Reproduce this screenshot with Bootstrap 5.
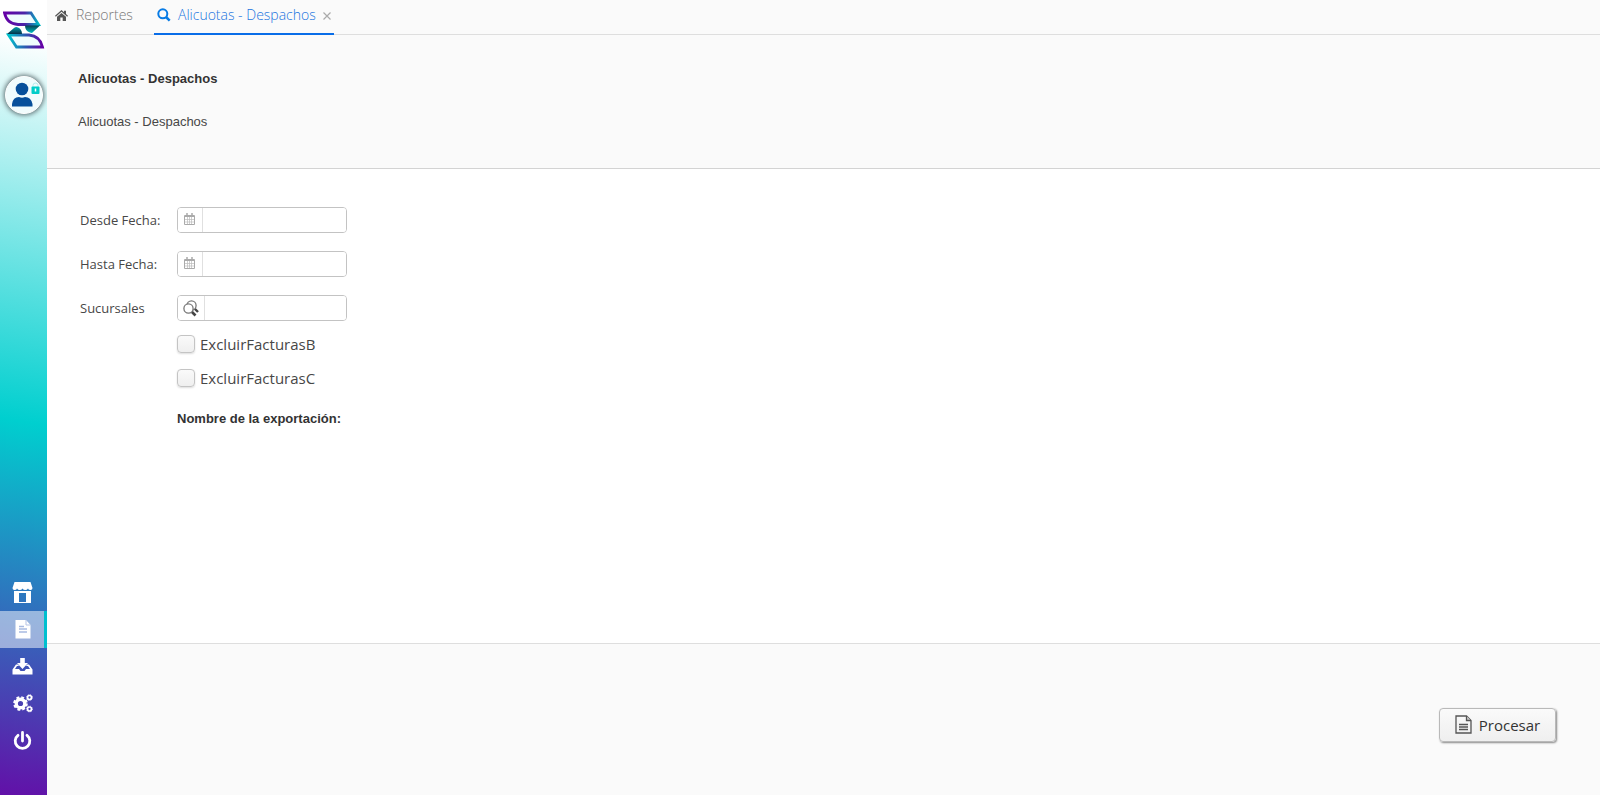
<!DOCTYPE html>
<html lang="es">
<head>
<meta charset="utf-8">
<meta name="viewport" content="width=device-width, initial-scale=1">
<title>Alicuotas - Despachos</title>
<link href="https://cdn.jsdelivr.net/npm/bootstrap@5.3.0/dist/css/bootstrap.min.css" rel="stylesheet">
<style>
body { font-family: "Open Sans", sans-serif; font-size: 14px; line-height: 20px; color: #474747; background: #fff; }
a { text-decoration: none; }
svg { display: block; flex: none; }
.sidebar { width: 47px; background: linear-gradient(190deg, #fff 5%, #00cfcf 53%, #2b7abf 74%, #6210a8 100%); }
.sidebar .logo { margin: 11px 0 0 3px; }
.avatar { width: 38px; height: 38px; margin: 27px 0 0 5px; background: #f1fcfd; border: 1px solid #fff; box-shadow: 0 0 5px 1px #5c6c70; }
.side-item { height: 37px; color: #fff; padding-left: 1px; border-right: 3px solid transparent; }
.side-item.active { background: rgba(255,255,255,.5); background-clip: padding-box; border-right-color: #00bfcf; }
.side-menu { margin-bottom: 36px; }
.tabs { height: 35px; background: #fafafa; border-bottom: 1px solid #dedede; font-weight: 300; }
.tab-link { height: 35px; padding-bottom: 5px; color: #777; font-size: 14px; }
.tab-home { width: 107px; padding-left: 8px; gap: 8px; }
.tab-active { width: 180px; padding-left: 3px; gap: 7px; color: #1b75df; border-bottom: 2px solid #096de8; padding-bottom: 3px; }
.tab-close { border: 0; background: none; padding: 2px 0 0; color: #999; }
.intro { height: 134px; padding: 34px 32px 0 31px; background: #fafafa; border-bottom: 1px solid #d3d3d3; font-family: "Liberation Sans", sans-serif; font-size: 13px; }
.intro h1, .export-name { font-family: "Liberation Sans", sans-serif; font-size: 13px; line-height: 20px; font-weight: 700; color: #333; margin: 0; }
.intro p { margin: 23px 0 0; }
.form-area { padding: 38px 32px 0 33px; }
.field-row { height: 26px; margin-bottom: 18px; }
.field-row:has(+ .checks) { margin-bottom: 14px; }
.field-row label { width: 97px; font-size: 13px; }
.field { width: 170px; height: 26px; border: 1px solid #c3c3c3; border-radius: 4px; background: #fff; overflow: hidden; }
.field-btn { width: 25px; border: 0; border-right: 1px solid #e0e0e0; background: #fff; padding: 0 2px 2px 0; display: flex; align-items: center; justify-content: center; }
.field-btn.wide { width: 27px; padding: 0; }
.field input { border: 0; outline: 0; min-width: 0; font-size: 14px; }
.checks { margin-left: 97px; }
.check-row { height: 18px; margin-bottom: 16px; font-size: 15px; gap: 5px; }
.check-row input { width: 18px; height: 18px; margin: 0; border: 1px solid #c4c4c4; border-radius: 4px; background: linear-gradient(#fafafa, #efefef); box-shadow: 0 1px 2px #ddd; appearance: none; }
.export-name { padding-top: 6px; }
.actions { height: 152px; padding: 64px 44px 0 0; background: #fafafa; border-top: 1px solid #dedede; }
.process { width: 117px; height: 34px; padding: 0; gap: 7px; font-size: 15px; line-height: 20px; color: #333; background: linear-gradient(#fafafa, #efefef); border: 1px solid #b9b9b9; border-radius: 4px; box-shadow: 1px 1px 2px #888; }
.process svg { margin-bottom: 2px; }
</style>
</head>
<body>
<div class="d-flex min-vh-100">
  <nav class="sidebar d-flex flex-column flex-shrink-0" aria-label="Principal">
    <a class="logo" href="#" aria-label="Inicio">
      <svg width="42" height="38" viewBox="0 0 42 38">
        <defs>
          <linearGradient id="ga"><stop offset="0" stop-color="#6500a5"/><stop offset=".6" stop-color="#4a25a8"/><stop offset="1" stop-color="#00b8c2"/></linearGradient>
          <linearGradient id="gb"><stop offset="0" stop-color="#00c3cd"/><stop offset=".5" stop-color="#2c59b0"/><stop offset="1" stop-color="#6500a5"/></linearGradient>
          <linearGradient id="gc" x2="0" y2="1"><stop offset="0" stop-color="#06404f"/><stop offset="1" stop-color="#00bfc4"/></linearGradient>
          <linearGradient id="gd" x2="0" y2="1"><stop offset="0" stop-color="#009aa5"/><stop offset="1" stop-color="#05334a"/></linearGradient>
        </defs>
        <path d="M1.500 2H28L35.500 13.500H15Q4 13 1.500 2Z" fill="#effcfd" stroke="url(#ga)" stroke-width="2.800"/>
        <path d="M5.500 24H26Q37 25 39.500 36H13.500Z" fill="#effcfd" stroke="url(#gb)" stroke-width="2.800"/>
        <path d="M22 14.500H37L30 21Q29 22.500 27 21.500Q22 20 22 14.500Z" fill="url(#gc)"/>
        <path d="M4 23L11 17Q13 15.500 15 16.500Q19 18 19 23Z" fill="url(#gd)"/>
      </svg>
    </a>
    <a class="avatar rounded-circle d-flex align-items-center justify-content-center" href="#" aria-label="Usuario">
      <svg width="34" height="34" viewBox="0 0 34 34">
        <circle cx="15" cy="11" r="6.300" fill="#07509b"/>
        <path d="M5 28.500V26Q6 19 12 19Q15 20.500 18 19Q24 19 25.500 26V28.500Z" fill="#07509b"/>
        <path d="M26 9V7.500Q26 5 28.500 5T31 7.500V9" fill="none" stroke="#b8eeee"/>
        <rect x="24.500" y="8.500" width="8" height="7.500" rx="1" fill="#00cdc9"/>
        <path d="M28.500 10.500V13.500" stroke="#fff" stroke-width="1.500"/>
      </svg>
    </a>
    <div class="side-menu mt-auto">
      <a class="side-item d-flex align-items-center justify-content-center" href="#" aria-label="Tienda">
        <svg width="21" height="22" viewBox="0 0 21 22" fill="#fff"><path d="M2.500 0H18.500L20.500 6Q20.500 8 18.500 8Q16.500 8 16 6.500Q15 8 13.200 8Q11.500 8 10.500 6.500Q9.500 8 7.800 8Q6 8 5 6.500Q4.500 8 2.500 8Q.5 8 .5 6Z"/><path fill-rule="evenodd" d="M2 9H19V21H2ZM7 11V20H14V11Z"/></svg>
      </a>
      <a class="side-item active d-flex align-items-center justify-content-center" href="#" aria-label="Reportes" aria-current="page">
        <svg width="16" height="19" viewBox="0 0 16 19"><path d="M.5 0H11L15.500 5V18.500H.5Z" fill="#fff"/><path d="M11 0V5H15.500" fill="none" stroke="#b5c4e6"/><path d="M4 6.500H9M4 9H12M4 12H12" stroke="#a8bae2" stroke-width="1.400"/></svg>
      </a>
      <a class="side-item d-flex align-items-center justify-content-center" href="#" aria-label="Descargas">
        <svg width="21" height="17" viewBox="0 0 21 17" fill="#fff"><path d="M8.200 0H12.800V5H16L10.500 11L5 5H8.200Z"/><path fill-rule="evenodd" d="M4 6.500H6L7 8H5L3 11H7L8.500 13H12.500L14 11H18L16 8H14L15 6.500H17L20.500 11.500V16.500H.5V11.500Z"/></svg>
      </a>
      <a class="side-item d-flex align-items-center justify-content-center" href="#" aria-label="Configuración">
        <svg width="20" height="19" viewBox="0 0 20 19" fill="none" stroke="#fff"><circle cx="7.500" cy="9.500" r="4.300" stroke-width="3.400"/><circle cx="7.500" cy="9.500" r="6.300" stroke-width="2" stroke-dasharray="2.900 2.050"/><circle cx="16.500" cy="3.500" r="2" stroke-width="1.700"/><circle cx="16.500" cy="3.500" r="2.900" stroke-width=".8" stroke-dasharray="1.100 1.180"/><circle cx="16.500" cy="15" r="2" stroke-width="1.700"/><circle cx="16.500" cy="15" r="2.900" stroke-width=".8" stroke-dasharray="1.100 1.180"/></svg>
      </a>
      <a class="side-item d-flex align-items-center justify-content-center" href="#" aria-label="Salir">
        <svg width="19" height="20" viewBox="0 0 19 20" fill="none" stroke="#fff" stroke-width="2.800" stroke-linecap="round"><path d="M9.500 1.500V10M5 4.300A7.300 7.300 0 1 0 14 4.300"/></svg>
      </a>
    </div>
  </nav>

  <main class="d-flex flex-column flex-grow-1">
    <nav class="tabs d-flex" aria-label="Pestañas">
      <a class="tab-link tab-home d-flex align-items-center" href="#">
        <svg width="13" height="11" viewBox="0 0 13 11" fill="#555"><path d="M6.500 0L9 2.200V.7H11V4L13 5.800L12.200 6.700L6.500 1.800L.8 6.700L0 5.800Z"/><path d="M2 6.700L6.500 2.900L11 6.700V11H7.700V7.500H5.300V11H2Z"/></svg>
        Reportes
      </a>
      <div class="tab-link tab-active d-flex align-items-center">
        <svg width="14" height="14" viewBox="0 0 14 14" fill="none" stroke="#087be5" stroke-width="2"><circle cx="5.800" cy="5.800" r="4.500"/><path d="M9 9L12.700 12.700" stroke-width="2.500"/></svg>
        <a href="#" class="text-reset" aria-current="page">Alicuotas - Despachos</a>
        <button class="tab-close" type="button" aria-label="Cerrar"><svg width="8" height="8" viewBox="0 0 8 8" stroke="#aaa" stroke-width="1.200"><path d="M.5 .5L7.500 7.500M7.500 .5L.5 7.500"/></svg></button>
      </div>
    </nav>

    <header class="intro">
      <h1>Alicuotas - Despachos</h1>
      <p>Alicuotas - Despachos</p>
    </header>

    <form id="report" class="form-area flex-grow-1">
      <div class="field-row d-flex align-items-center">
        <label for="desde">Desde Fecha:</label>
        <div class="field d-flex">
          <button class="field-btn flex-shrink-0" type="button" aria-label="Elegir fecha"><svg width="11" height="12" viewBox="0 0 11 12" fill="none" stroke="#aaa"><path d="M.5 2.500H10.500V11.500H.5Z"/><path d="M1 3H10" stroke-width="2"/><path d="M3 0V3M8 0V3" stroke-width="1.500"/><path d="M3.500 4V11M5.500 4V11M7.500 4V11M1 6.500H10M1 9H10" stroke="#bbb" stroke-width=".7"/></svg></button>
          <input id="desde" class="w-100" type="text">
        </div>
      </div>
      <div class="field-row d-flex align-items-center">
        <label for="hasta">Hasta Fecha:</label>
        <div class="field d-flex">
          <button class="field-btn flex-shrink-0" type="button" aria-label="Elegir fecha"><svg width="11" height="12" viewBox="0 0 11 12" fill="none" stroke="#aaa"><path d="M.5 2.500H10.500V11.500H.5Z"/><path d="M1 3H10" stroke-width="2"/><path d="M3 0V3M8 0V3" stroke-width="1.500"/><path d="M3.500 4V11M5.500 4V11M7.500 4V11M1 6.500H10M1 9H10" stroke="#bbb" stroke-width=".7"/></svg></button>
          <input id="hasta" class="w-100" type="text">
        </div>
      </div>
      <div class="field-row d-flex align-items-center">
        <label for="sucursales">Sucursales</label>
        <div class="field d-flex">
          <button class="field-btn wide flex-shrink-0" type="button" aria-label="Buscar sucursal"><svg width="16" height="17" viewBox="0 0 16 17" fill="none" stroke="#777" stroke-width="1.300"><circle cx="8.500" cy="5.500" r="4.600"/><path d="M12 9L15 12" stroke="#444" stroke-width="2.400"/><circle cx="5.500" cy="8.500" r="4.600" fill="#fff"/><path d="M9 12L12.500 15.500" stroke="#444" stroke-width="2.600"/></svg></button>
          <input id="sucursales" class="w-100" type="text">
        </div>
      </div>
      <div class="checks">
        <div class="check-row d-flex align-items-center"><input type="checkbox" id="facturas-b"><label for="facturas-b">ExcluirFacturasB</label></div>
        <div class="check-row d-flex align-items-center"><input type="checkbox" id="facturas-c"><label for="facturas-c">ExcluirFacturasC</label></div>
        <div class="export-name">Nombre de la exportación:</div>
      </div>
    </form>

    <footer class="actions d-flex justify-content-end align-items-start">
      <button class="process d-flex align-items-center justify-content-center" type="submit" form="report">
        <svg width="17" height="19" viewBox="0 0 17 19" fill="none" stroke="#555" stroke-width="1.300"><path d="M1 1H11.500L16 5.500V18H1Z"/><path d="M11.500 1V5.500H16" fill="#ccc"/><path d="M4 9.500H13M4 12H13M4 14.500H13"/></svg>
        Procesar
      </button>
    </footer>
  </main>
</div>
<script src="https://cdn.jsdelivr.net/npm/bootstrap@5.3.0/dist/js/bootstrap.bundle.min.js"></script>
</body>
</html>
